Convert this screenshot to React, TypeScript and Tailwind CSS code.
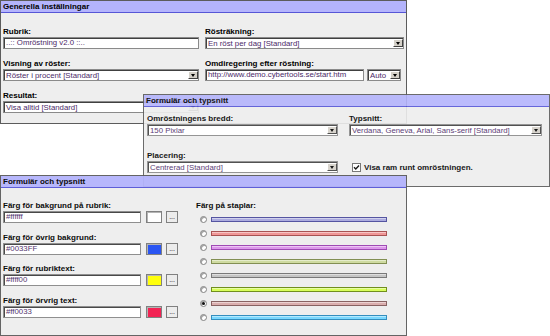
import type { ReactNode } from 'react';

function Panel({
  title,
  className,
  bodyClass,
  children,
}: {
  title: string;
  className: string;
  bodyClass: string;
  children: ReactNode;
}) {
  return (
    <div className={`absolute flex flex-col border border-[#5c5c5c] bg-[#eeeeee] ${className}`}>
      <div className="h-[12px] shrink-0 border-b border-[#5656d6] bg-[#b4b4fc] pl-[2px] text-[8px] font-bold leading-[11px] text-black">
        {title}
      </div>
      <div className={bodyClass}>{children}</div>
    </div>
  );
}

function Label({ children }: { children: ReactNode }) {
  return <div className="h-[10px] whitespace-nowrap text-[8px] font-bold leading-[10px] text-black">{children}</div>;
}

function TextBox({ value, className = '' }: { value: string; className?: string }) {
  return (
    <div
      className={`h-[12px] overflow-hidden whitespace-nowrap border border-[#8a8a8a] bg-white pl-[2px] text-[7.8px] leading-[10px] text-[#4b2a68] shadow-[inset_1px_1px_0_#404040] ${className}`}
    >
      {value}
    </div>
  );
}

function Select({ value, className = '' }: { value: string; className?: string }) {
  return (
    <div
      className={`flex h-[12px] items-stretch overflow-hidden border border-[#8a8a8a] bg-white shadow-[inset_1px_1px_0_#404040] ${className}`}
    >
      <div className="flex-1 overflow-hidden whitespace-nowrap pl-[2px] pt-[1px] text-[7.8px] leading-[9px] text-[#4b2a68]">
        {value}
      </div>
      <div className="my-[1px] flex w-[10px] items-center justify-center border border-t-white border-l-white border-r-[#404040] border-b-[#404040] bg-[#d4d0c8]">
        <div className="h-0 w-0 border-x-[2.5px] border-t-[3px] border-x-transparent border-t-black" />
      </div>
    </div>
  );
}

function ColorRow({ label, value, color }: { label: string; value: string; color: string }) {
  return (
    <div className="flex flex-col">
      <Label>{label}</Label>
      <div className="flex items-center">
        <TextBox value={value} className="w-[140px]" />
        <div
          className="ml-[5px] h-[12px] w-[16px] border border-[#7a7a7a] shadow-[inset_1px_1px_0_#b0b0b0]"
          style={{ backgroundColor: color }}
        />
        <div className="ml-[4px] flex h-[12px] w-[12px] items-end justify-center border border-[#7a7a7a] bg-[#ececec] pb-[2px] text-[7px] leading-[6px] text-black">
          ...
        </div>
      </div>
    </div>
  );
}

const bars = [
  { fill: '#a8a8de', edge: '#4c4c9c' },
  { fill: '#f09292', edge: '#a44a4a' },
  { fill: '#dc92ec', edge: '#9a42b0' },
  { fill: '#cdda9c', edge: '#7c8a4a' },
  { fill: '#c2c2c2', edge: '#727272' },
  { fill: '#d6ff52', edge: '#6a8a12' },
  { fill: '#d9aaaa', edge: '#825a5a' },
  { fill: '#72d6ff', edge: '#2a88bb' },
];

export default function App() {
  return (
    <div className="relative h-[336px] w-[550px] overflow-hidden bg-white font-['Liberation_Sans',Arial,sans-serif]">
      {/* Generella inställningar */}
      <Panel
        title="Generella inställningar"
        className="left-0 top-0 h-[124px] w-[407px]"
        bodyClass="grid grid-cols-[196px_199px] gap-x-[6px] gap-y-[10px] pl-[2px] pt-[14px]"
      >
        <div className="flex flex-col">
          <Label>Rubrik:</Label>
          <TextBox value="..:: Omröstning v2.0 ::.." />
        </div>
        <div className="flex flex-col">
          <Label>Rösträkning:</Label>
          <Select value="En röst per dag [Standard]" />
        </div>
        <div className="flex flex-col">
          <Label>Visning av röster:</Label>
          <Select value="Röster i procent [Standard]" />
        </div>
        <div className="flex flex-col">
          <Label>Omdiregering efter röstning:</Label>
          <div className="flex gap-[3px]">
            <TextBox value="http://www.demo.cybertools.se/start.htm" className="w-[159px]" />
            <Select value="Auto" className="w-[34px]" />
          </div>
        </div>
        <div className="flex flex-col">
          <Label>Resultat:</Label>
          <Select value="Visa alltid [Standard]" />
        </div>
      </Panel>

      {/* Formulär och typsnitt */}
      <Panel
        title="Formulär och typsnitt"
        className="left-[143px] top-[94px] h-[93px] w-[407px] opacity-90"
        bodyClass="grid grid-cols-[191px_193px] gap-x-[11px] gap-y-[15px] pl-[3px] pt-[7px]"
      >
        <div className="flex flex-col">
          <Label>Omröstningens bredd:</Label>
          <Select value="150 Pixlar" />
        </div>
        <div className="flex flex-col">
          <Label>Typsnitt:</Label>
          <Select value="Verdana, Geneva, Arial, Sans-serif [Standard]" />
        </div>
        <div className="flex flex-col">
          <Label>Placering:</Label>
          <Select value="Centrerad [Standard]" />
        </div>
        <div className="flex items-end pb-[1px] pl-[3px]">
          <div className="flex h-[9px] w-[9px] items-center justify-center border border-[#6a6a6a] bg-white">
            <svg viewBox="0 0 7 7" className="h-[7px] w-[7px]">
              <path d="M1 3.2 L2.8 5 L6 1.6" fill="none" stroke="#000" strokeWidth="1.4" />
            </svg>
          </div>
          <span className="ml-[3px] whitespace-nowrap text-[8px] font-bold leading-[9px] text-black">
            Visa ram runt omröstningen.
          </span>
        </div>
      </Panel>

      {/* Färger */}
      <Panel
        title="Formulär och typsnitt"
        className="left-0 top-[175px] h-[161px] w-[407px] opacity-95"
        bodyClass="flex pl-[2px] pt-[13px]"
      >
        <div className="flex w-[175px] flex-col gap-[9.5px]">
          <ColorRow label="Färg för bakgrund på rubrik:" value="#ffffff" color="#ffffff" />
          <ColorRow label="Färg för övrig bakgrund:" value="#0033FF" color="#1f4cf2" />
          <ColorRow label="Färg för rubriktext:" value="#ffff00" color="#ffff00" />
          <ColorRow label="Färg för örvrig text:" value="#ff0033" color="#f2184a" />
        </div>
        <div className="ml-[18px] flex w-[192px] flex-col">
          <Label>Färg på staplar:</Label>
          <div className="flex flex-col pt-[1px]">
            {bars.map((b, i) => (
              <div key={i} className="flex h-[14px] items-center">
                <div className="ml-[4px] flex h-[7px] w-[7px] items-center justify-center rounded-full border border-[#7c7c7c] bg-white shadow-[inset_1px_1px_0_#9a9a9a]">
                  {i === 6 && <div className="h-[3px] w-[3px] rounded-full bg-black" />}
                </div>
                <div
                  className="ml-[4px] h-[5px] w-[176px] border shadow-[inset_0_1px_0_rgba(255,255,255,0.45)]"
                  style={{ backgroundColor: b.fill, borderColor: b.edge }}
                />
              </div>
            ))}
          </div>
        </div>
      </Panel>
    </div>
  );
}
